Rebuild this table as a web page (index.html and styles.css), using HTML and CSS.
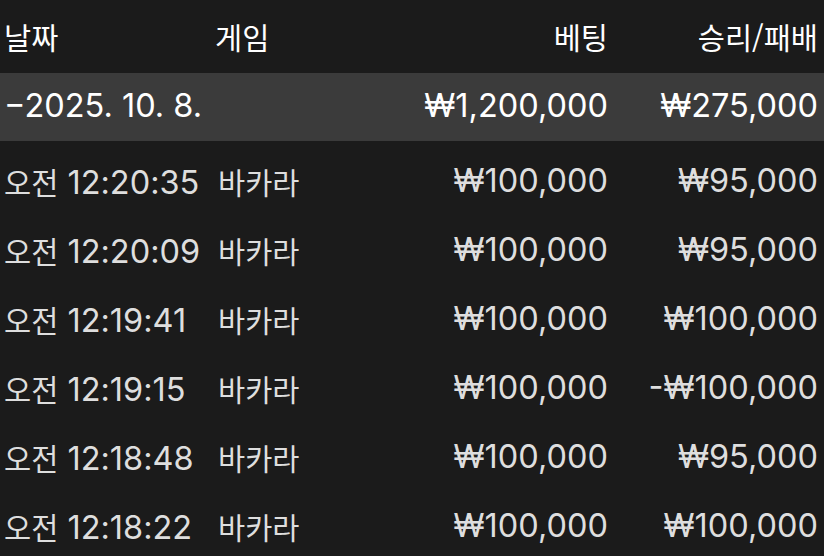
FILE: index.html
```html
<!DOCTYPE html>
<html lang="ko">
<head>
<meta charset="utf-8">
<link rel="stylesheet" href="styles.css">
</head>
<body>
<div class="table">
  <div class="row head">
    <div class="ko">날짜</div><div class="ko">게임</div><div class="num ko">베팅</div><div class="num ko">승리/패배</div>
  </div>
  <div class="row group">
    <div class="date">−2025. 10. 8.</div><div></div><div class="num">₩1,200,000</div><div class="num">₩275,000</div>
  </div>
  <div class="rows">
    <div class="row item"><div><span class="ko">오전</span> 12:20:35</div><div class="ko">바카라</div><div class="num">₩100,000</div><div class="num">₩95,000</div></div>
    <div class="row item"><div><span class="ko">오전</span> 12:20:09</div><div class="ko">바카라</div><div class="num">₩100,000</div><div class="num">₩95,000</div></div>
    <div class="row item"><div><span class="ko">오전</span> 12:19:41</div><div class="ko">바카라</div><div class="num">₩100,000</div><div class="num">₩100,000</div></div>
    <div class="row item"><div><span class="ko">오전</span> 12:19:15</div><div class="ko">바카라</div><div class="num">₩100,000</div><div class="num">-₩100,000</div></div>
    <div class="row item"><div><span class="ko">오전</span> 12:18:48</div><div class="ko">바카라</div><div class="num">₩100,000</div><div class="num">₩95,000</div></div>
    <div class="row item"><div><span class="ko">오전</span> 12:18:22</div><div class="ko">바카라</div><div class="num">₩100,000</div><div class="num">₩100,000</div></div>
  </div>
</div>
</body>
</html>
```
FILE: styles.css
```css
html, body {
  margin: 0;
  padding: 0;
  background: #1b1b1b;
  height: 556px;
  overflow: hidden;
}
.table {
  font-family: "Inter", "Noto Sans CJK KR", sans-serif;
  font-size: 32.5px;
  color: #dedede;
}
.ko {
  font-family: "Noto Sans CJK KR", sans-serif;
  font-size: 29.5px;
}
.row {
  display: grid;
  grid-template-columns: 214px 190px 200px 210px;
  align-items: center;
  padding: 0 6px 0 4px;
  white-space: nowrap;
}
.num { text-align: right; }
.head {
  height: 73px;
  color: #fff;
  padding-bottom: 2px;
  box-sizing: border-box;
}
.head > div:nth-child(2) { margin-left: -3px; }
.group {
  height: 68px;
  background: #3b3b3b;
  color: #fff;
  box-sizing: border-box;
  padding-bottom: 4px;
}
.rows { padding-top: 7px; }
.item {
  height: 69px;
  box-sizing: border-box;
  padding-bottom: 4px;
}
```
